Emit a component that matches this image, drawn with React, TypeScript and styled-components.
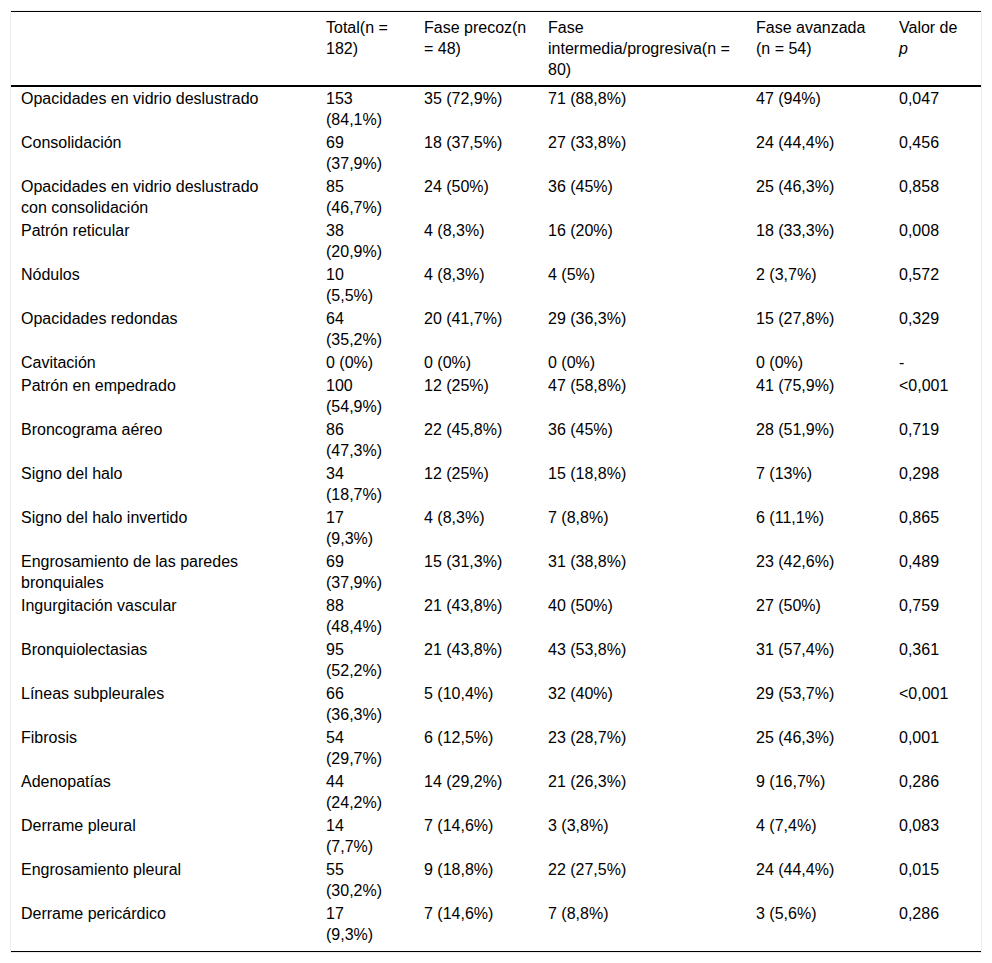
import React from "react";
import styled, { createGlobalStyle } from "styled-components";

const GlobalStyle = createGlobalStyle`
  html, body { margin: 0; padding: 0; background: #fff; }
  body { font-family: "Liberation Sans", Arial, sans-serif; color: #000; }
`;

const Frame = styled.div`
  margin: 10px;
  width: 970px;
  border: 1px solid #ececec;
  border-top-color: #f4f4f4;
  background: #fff;
`;

const Table = styled.table`
  width: 100%;
  border-collapse: collapse;
  table-layout: fixed;
  font-size: 16px;
  line-height: 21px;
`;

const HeadRow = styled.tr`
  border-top: 1px solid #000;
  border-bottom: 2px solid #000;
`;

const Th = styled.th<{ $pr?: number }>`
  text-align: left;
  vertical-align: top;
  font-weight: normal;
  padding: 5px ${(p) => p.$pr ?? 10}px 5px 10px;
`;

const Row = styled.tr<{ $last?: boolean }>`
  border-bottom: ${(p) => (p.$last ? "1px solid #000" : "none")};
`;

const Td = styled.td<{ $pr?: number; $last?: boolean }>`
  text-align: left;
  vertical-align: top;
  padding: 1px ${(p) => p.$pr ?? 10}px ${(p) => (p.$last ? 6 : 1)}px 10px;
`;

const Italic = styled.i`
  font-style: italic;
`;

const cols = [305, 98, 124, 208, 143, 92];
const pads = [40, 22, 10, 10, 10, 15];

const rows: string[][] = [
  ["Opacidades en vidrio deslustrado", "153 (84,1%)", "35 (72,9%)", "71 (88,8%)", "47 (94%)", "0,047"],
  ["Consolidación", "69 (37,9%)", "18 (37,5%)", "27 (33,8%)", "24 (44,4%)", "0,456"],
  ["Opacidades en vidrio deslustrado con consolidación", "85 (46,7%)", "24 (50%)", "36 (45%)", "25 (46,3%)", "0,858"],
  ["Patrón reticular", "38 (20,9%)", "4 (8,3%)", "16 (20%)", "18 (33,3%)", "0,008"],
  ["Nódulos", "10 (5,5%)", "4 (8,3%)", "4 (5%)", "2 (3,7%)", "0,572"],
  ["Opacidades redondas", "64 (35,2%)", "20 (41,7%)", "29 (36,3%)", "15 (27,8%)", "0,329"],
  ["Cavitación", "0 (0%)", "0 (0%)", "0 (0%)", "0 (0%)", "-"],
  ["Patrón en empedrado", "100 (54,9%)", "12 (25%)", "47 (58,8%)", "41 (75,9%)", "<0,001"],
  ["Broncograma aéreo", "86 (47,3%)", "22 (45,8%)", "36 (45%)", "28 (51,9%)", "0,719"],
  ["Signo del halo", "34 (18,7%)", "12 (25%)", "15 (18,8%)", "7 (13%)", "0,298"],
  ["Signo del halo invertido", "17 (9,3%)", "4 (8,3%)", "7 (8,8%)", "6 (11,1%)", "0,865"],
  ["Engrosamiento de las paredes bronquiales", "69 (37,9%)", "15 (31,3%)", "31 (38,8%)", "23 (42,6%)", "0,489"],
  ["Ingurgitación vascular", "88 (48,4%)", "21 (43,8%)", "40 (50%)", "27 (50%)", "0,759"],
  ["Bronquiolectasias", "95 (52,2%)", "21 (43,8%)", "43 (53,8%)", "31 (57,4%)", "0,361"],
  ["Líneas subpleurales", "66 (36,3%)", "5 (10,4%)", "32 (40%)", "29 (53,7%)", "<0,001"],
  ["Fibrosis", "54 (29,7%)", "6 (12,5%)", "23 (28,7%)", "25 (46,3%)", "0,001"],
  ["Adenopatías", "44 (24,2%)", "14 (29,2%)", "21 (26,3%)", "9 (16,7%)", "0,286"],
  ["Derrame pleural", "14 (7,7%)", "7 (14,6%)", "3 (3,8%)", "4 (7,4%)", "0,083"],
  ["Engrosamiento pleural", "55 (30,2%)", "9 (18,8%)", "22 (27,5%)", "24 (44,4%)", "0,015"],
  ["Derrame pericárdico", "17 (9,3%)", "7 (14,6%)", "7 (8,8%)", "3 (5,6%)", "0,286"],
];

export default function App() {
  return (
    <>
      <GlobalStyle />
      <Frame>
        <Table>
          <colgroup>
            {cols.map((w, i) => (
              <col key={i} style={{ width: w }} />
            ))}
          </colgroup>
          <thead>
            <HeadRow>
              <Th $pr={pads[0]} />
              <Th $pr={pads[1]}>Total(n = 182)</Th>
              <Th $pr={pads[2]}>Fase precoz(n = 48)</Th>
              <Th $pr={pads[3]}>Fase intermedia/progresiva(n = 80)</Th>
              <Th $pr={pads[4]}>Fase avanzada (n = 54)</Th>
              <Th $pr={pads[5]}>
                Valor de <Italic>p</Italic>
              </Th>
            </HeadRow>
          </thead>
          <tbody>
            {rows.map((r, ri) => {
              const last = ri === rows.length - 1;
              return (
                <Row key={ri} $last={last}>
                  {r.map((c, ci) => (
                    <Td key={ci} $pr={pads[ci]} $last={last}>
                      {c}
                    </Td>
                  ))}
                </Row>
              );
            })}
          </tbody>
        </Table>
      </Frame>
    </>
  );
}
